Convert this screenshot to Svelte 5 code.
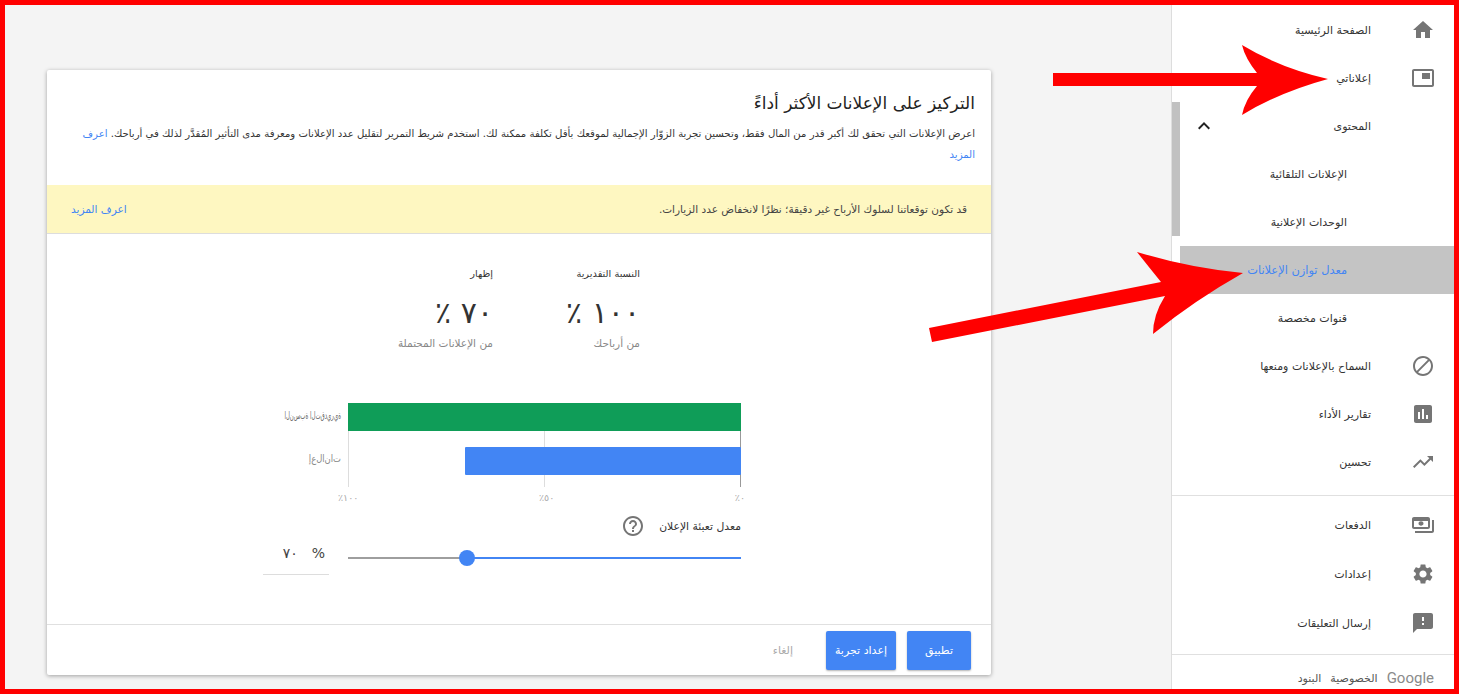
<script lang="ts">
	const icons = {
		home: 'M10 20v-6h4v6h5v-8h3L12 3 2 12h3v8z',
		ads: 'M19 7h-8v6h8V7zm2-4H3c-1.1 0-2 .9-2 2v14c0 1.1.9 1.98 2 1.98h18c1.1 0 2-.88 2-1.98V5c0-1.1-.9-2-2-2zm0 16.01H3V4.98h18v14.03z',
		block: 'M12 2C6.48 2 2 6.48 2 12s4.48 10 10 10 10-4.48 10-10S17.52 2 12 2zM4 12c0-4.42 3.58-8 8-8 1.85 0 3.55.63 4.9 1.69L5.69 16.9C4.63 15.55 4 13.85 4 12zm8 8c-1.85 0-3.55-.63-4.9-1.69L18.31 7.1C19.37 8.45 20 10.15 20 12c0 4.42-3.58 8-8 8z',
		report: 'M19 3H5c-1.1 0-2 .9-2 2v14c0 1.1.9 2 2 2h14c1.1 0 2-.9 2-2V5c0-1.1-.9-2-2-2zM9 17H7v-7h2v7zm4 0h-2V7h2v10zm4 0h-2v-4h2v4z',
		trend: 'M16 6l2.29 2.29-4.88 4.88-4-4L2 16.59 3.41 18l6-6 4 4 6.3-6.29L22 12V6z',
		money: 'M19 14V6c0-1.1-.9-2-2-2H3c-1.1 0-2 .9-2 2v8c0 1.1.9 2 2 2h14c1.1 0 2-.9 2-2zm-2 0H3V8h14v6zm-7-5.7c-1.3 0-2.5.8-2.5 2.2s1.2 2.2 2.5 2.2 2.5-.8 2.5-2.2-1.2-2.2-2.5-2.2zM23 7v11c0 1.1-.9 2-2 2H4v-2h17V7h2z',
		gear: 'M19.14 12.94c.04-.3.06-.61.06-.94 0-.32-.02-.64-.07-.94l2.03-1.58c.18-.14.23-.41.12-.61l-1.92-3.32c-.12-.22-.37-.29-.59-.22l-2.39.96c-.5-.38-1.03-.7-1.62-.94l-.36-2.54c-.04-.24-.24-.41-.48-.41h-3.84c-.24 0-.43.17-.47.41l-.36 2.54c-.59.24-1.13.57-1.62.94l-2.39-.96c-.22-.08-.47 0-.59.22L2.74 8.87c-.12.21-.08.47.12.61l2.03 1.58c-.05.3-.09.63-.09.94s.02.64.07.94l-2.03 1.58c-.18.14-.23.41-.12.61l1.92 3.32c.12.22.37.29.59.22l2.39-.96c.5.38 1.03.7 1.62.94l.36 2.54c.05.24.24.41.48.41h3.84c.24 0 .44-.17.47-.41l.36-2.54c.59-.24 1.13-.56 1.62-.94l2.39.96c.22.08.47 0 .59-.22l1.92-3.32c.12-.22.07-.47-.12-.61l-2.01-1.58zM12 15.6c-1.98 0-3.6-1.62-3.6-3.6s1.62-3.6 3.6-3.6 3.6 1.62 3.6 3.6-1.62 3.6-3.6 3.6z',
		feedback: 'M20 2H4c-1.1 0-1.99.9-1.99 2L2 22l4-4h14c1.1 0 2-.9 2-2V4c0-1.1-.9-2-2-2zm-7 12h-2v-2h2v2zm0-4h-2V6h2v4z',
		help: 'M11 18h2v-2h-2v2zm1-16C6.48 2 2 6.48 2 12s4.48 10 10 10 10-4.48 10-10S17.52 2 12 2zm0 18c-4.41 0-8-3.59-8-8s3.59-8 8-8 8 3.59 8 8-3.59 8-8 8zm0-14c-2.21 0-4 1.79-4 4h2c0-1.1.9-2 2-2s2 .9 2 2c0 2-3 1.75-3 5h2c0-2.25 3-2.5 3-5 0-2.21-1.79-4-4-4z',
		chevron: 'M12 8l-6 6 1.41 1.41L12 10.83l4.59 4.58L18 14z'
	};

	const mainNav = [
		{ label: 'الصفحة الرئيسية', icon: icons.home },
		{ label: 'إعلاناتي', icon: icons.ads },
		{ label: 'المحتوى', chevron: true },
		{ label: 'الإعلانات التلقائية', sub: true },
		{ label: 'الوحدات الإعلانية', sub: true },
		{ label: 'معدل توازن الإعلانات', sub: true, active: true },
		{ label: 'قنوات مخصصة', sub: true },
		{ label: 'السماح بالإعلانات ومنعها', icon: icons.block },
		{ label: 'تقارير الأداء', icon: icons.report },
		{ label: 'تحسين', icon: icons.trend }
	];

	const lowerNav = [
		{ label: 'الدفعات', icon: icons.money },
		{ label: 'إعدادات', icon: icons.gear },
		{ label: 'إرسال التعليقات', icon: icons.feedback }
	];

	const stats = [
		{ title: 'النسبة التقديرية', value: '١٠٠ ٪', note: 'من أرباحك' },
		{ title: 'إظهار', value: '٧٠ ٪', note: 'من الإعلانات المحتملة' }
	];

	// the chart draws its labels with the letters unjoined, hence the ZWNJs
	const bars = [
		{ label: 'ا\u200cل\u200cن\u200cس\u200cب\u200cة ا\u200cل\u200cت\u200cق\u200cد\u200cي\u200cر\u200cي\u200cة', width: 100, tone: 'green' },
		{ label: 'إ\u200cع\u200cل\u200cا\u200cن\u200cا\u200cت', width: 70.3, tone: 'blue' }
	];
</script>

<div class="page" dir="rtl">
	<aside class="sidebar">
		<nav class="nav-top">
			{#each mainNav as item}
				<div class="row" class:sub={item.sub} class:active={item.active}>
					{#if !item.sub}
						<span class="icon-box">
							{#if item.icon}
								<svg viewBox="0 0 24 24" width="24" height="24"><path d={item.icon} /></svg>
							{/if}
						</span>
					{/if}
					<span class="row-label">{item.label}</span>
					{#if item.chevron}
						<svg class="chevron" viewBox="0 0 24 24" width="24" height="24"><path d={icons.chevron} /></svg>
					{/if}
				</div>
			{/each}
		</nav>
		<nav class="nav-lower">
			{#each lowerNav as item}
				<div class="row">
					<span class="icon-box">
						<svg viewBox="0 0 24 24" width="24" height="24"><path d={item.icon} /></svg>
					</span>
					<span class="row-label">{item.label}</span>
				</div>
			{/each}
		</nav>
		<footer class="side-footer">
			<span class="google">Google</span>
			<span>الخصوصية</span>
			<span>البنود</span>
		</footer>
		<div class="scroll-thumb"></div>
	</aside>

	<main class="content">
		<section class="card">
			<header class="card-head">
				<h1>التركيز على الإعلانات الأكثر أداءً</h1>
				<p>
					اعرض الإعلانات التي تحقق لك أكبر قدر من المال فقط، وتحسين تجربة الزوّار الإجمالية لموقعك بأقل تكلفة ممكنة لك. استخدم شريط التمرير لتقليل عدد الإعلانات ومعرفة مدى التأثير المُقدَّر لذلك في أرباحك.
					<a href="#more">اعرف المزيد</a>
				</p>
			</header>

			<div class="banner">
				<span>قد تكون توقعاتنا لسلوك الأرباح غير دقيقة؛ نظرًا لانخفاض عدد الزيارات.</span>
				<a href="#more">اعرف المزيد</a>
			</div>

			<div class="stats">
				{#each stats as stat}
					<div class="stat">
						<div class="stat-title">{stat.title}</div>
						<div class="stat-value">{stat.value}</div>
						<div class="stat-note">{stat.note}</div>
					</div>
				{/each}
			</div>

			<div class="chart">
				<div class="plot">
					<i class="grid-line start"></i>
					<i class="grid-line mid"></i>
					<i class="grid-line end"></i>
					{#each bars as bar}
						<div class="bar-row">
							<div class="bar {bar.tone}" style="width: {bar.width}%"></div>
							<bdo class="bar-label {bar.tone}" dir="ltr">{bar.label}</bdo>
						</div>
					{/each}
				</div>
				<div class="axis">
					<span>٠٪</span>
					<span>٥٠٪</span>
					<span>١٠٠٪</span>
				</div>
			</div>

			<div class="fill">
				<div class="fill-head">
					<span>معدل تعبئة الإعلان</span>
					<svg viewBox="0 0 24 24" width="24" height="24"><path d={icons.help} /></svg>
				</div>
				<div class="fill-row">
					<div class="track">
						<div class="track-on"></div>
						<div class="knob"></div>
					</div>
					<div class="fill-input">
						<span class="pct">%</span>
						<span>٧٠</span>
					</div>
				</div>
			</div>

			<div class="actions">
				<button class="btn apply">تطبيق</button>
				<button class="btn setup">إعداد تجربة</button>
				<button class="cancel">إلغاء</button>
			</div>
		</section>
	</main>

	<svg class="arrows" viewBox="0 0 1459 694" width="1459" height="694">
		<path d="M1053 73H1257Q1245 58 1242 45Q1280 68 1328 79Q1280 92 1242 115Q1245 100 1257 86H1053Z" />
		<path d="M929 328L1161 282Q1148 266 1137 252Q1190 268 1243 273Q1195 300 1153 334Q1153 315 1165 296L932 342Z" />
	</svg>
</div>

<style>
	:global(body) {
		margin: 0;
	}

	.page {
		position: relative;
		box-sizing: border-box;
		display: flex;
		width: 1459px;
		height: 694px;
		overflow: hidden;
		border: 5px solid #f00;
		background: #f4f4f4;
		color: #333;
		font-family: 'DejaVu Sans', 'Liberation Sans', sans-serif;
		font-size: 11px;
	}

	/* sidebar */
	.sidebar {
		position: relative;
		flex: 0 0 283px;
		box-sizing: border-box;
		padding-top: 1px;
		border-left: 1px solid #ddd;
		background: #fff;
	}

	.nav-top {
		padding-bottom: 9px;
		border-bottom: 1px solid #e0e0e0;
	}

	.nav-lower {
		padding: 5px 0 7px;
		border-bottom: 1px solid #e0e0e0;
	}

	.row {
		display: flex;
		align-items: center;
		height: 48px;
		margin-left: 8px;
		padding-right: 19px;
		color: #333;
	}

	.row.sub {
		padding-right: 107px;
	}

	.row.active {
		background: #c4c4c4;
		color: #4285f4;
		font-size: 11.4px;
	}

	.icon-box {
		flex: 0 0 24px;
		height: 24px;
		margin-left: 40px;
	}

	.icon-box svg {
		display: block;
		fill: #757575;
	}

	.chevron {
		margin-right: auto;
		margin-left: 12px;
		fill: #222;
	}

	.nav-lower .row:nth-child(n + 2) {
		margin-top: 1px;
	}

	.side-footer {
		display: flex;
		align-items: center;
		gap: 9px;
		padding: 14px 20px 0 0;
		font-size: 11px;
		color: #555;
	}

	.google {
		font-family: Roboto, sans-serif;
		font-size: 15px;
		color: #8a8a8a;
	}

	.scroll-thumb {
		position: absolute;
		top: 97px;
		left: 0;
		width: 8px;
		height: 134px;
		background: #c1c1c1;
	}

	/* main column */
	.content {
		flex: 1;
		padding: 65px 180px 0 42px;
	}

	.card {
		display: flex;
		flex-direction: column;
		height: 605px;
		border-radius: 2px;
		background: #fff;
		box-shadow: 0 1px 4px rgba(0, 0, 0, 0.35);
	}

	.card-head {
		height: 115px;
		box-sizing: border-box;
		padding: 21px 16px 0;
	}

	h1 {
		margin: 0;
		font-size: 17px;
		font-weight: 400;
		line-height: 24px;
		color: #222;
	}

	.card-head p {
		margin: 8px 0 0;
		font-size: 10.15px;
		line-height: 21px;
		color: #333;
	}

	a {
		color: #4285f4;
		text-decoration: none;
	}

	.banner {
		display: flex;
		align-items: center;
		justify-content: space-between;
		height: 48px;
		padding: 0 24px;
		border-bottom: 1px solid #ddd;
		background: #fef7c1;
		color: #444;
		font-size: 10.5px;
	}

	.stats {
		display: flex;
		gap: 50px;
		padding: 32px 351px 0 0;
		height: 137px;
	}

	.stat {
		width: 97px;
		white-space: nowrap;
	}

	.stat-title {
		font-size: 9.8px;
		line-height: 16px;
	}

	.stat-value {
		margin-top: 12px;
		font-size: 30px;
		line-height: 38px;
		color: #333;
	}

	.stat-note {
		margin-top: 3px;
		font-size: 10.5px;
		line-height: 16px;
		color: #888;
	}

	/* chart */
	.chart {
		margin-right: 250px;
		width: 393px;
	}

	.plot {
		position: relative;
		display: flex;
		flex-direction: column;
		gap: 16px;
		height: 84px;
	}

	.grid-line {
		position: absolute;
		top: 0;
		bottom: 0;
		width: 1px;
		background: #ddd;
	}

	.grid-line.start {
		right: 0;
		background: #999;
	}

	.grid-line.mid {
		right: 196px;
	}

	.grid-line.end {
		left: 0;
	}

	.bar-row {
		position: relative;
		height: 28px;
	}

	.bar {
		position: relative;
		height: 28px;
	}

	.bar.green {
		background: #0f9d58;
	}

	.bar.blue {
		background: #4285f4;
		border-radius: 1px;
	}

	.bar-label {
		position: absolute;
		top: 7px;
		left: -7px;
		transform-origin: right center;
		white-space: nowrap;
		font-size: 10px;
		color: #888;
	}

	/* letter-spacing does nothing on Arabic here, so squeeze the run instead */
	.bar-label.green {
		transform: translateX(-100%) scaleX(0.54);
		color: #666;
	}

	.bar-label.blue {
		top: 6px;
		transform: translateX(-100%) scaleX(0.84);
	}

	.axis {
		position: relative;
		display: flex;
		justify-content: space-between;
		height: 20px;
		margin: 0 -4px 0 -10px;
		padding-top: 4px;
		box-sizing: border-box;
		font-size: 9.5px;
		line-height: 14px;
		color: #aaa;
	}

	/* ad fill slider */
	.fill {
		margin-right: 250px;
		margin-top: 7px;
	}

	.fill-head {
		display: flex;
		align-items: center;
		gap: 14px;
		height: 24px;
		font-size: 10.8px;
		color: #333;
	}

	.fill-head svg {
		fill: #757575;
	}

	.fill-row {
		display: flex;
		align-items: center;
		margin-top: 4px;
		height: 32px;
	}

	.track {
		position: relative;
		width: 393px;
		height: 2px;
		background: #9e9e9e;
	}

	.track-on {
		width: 274px;
		height: 2px;
		background: #4285f4;
	}

	.knob {
		position: absolute;
		top: -7px;
		right: 266px;
		width: 16px;
		height: 16px;
		border-radius: 50%;
		background: #4285f4;
	}

	.fill-input {
		display: flex;
		align-items: center;
		gap: 14px;
		width: 66px;
		box-sizing: border-box;
		height: 32px;
		margin-top: 1px;
		margin-right: 19px;
		padding: 0 4px 10px 0;
		border-bottom: 1px solid #ddd;
		font-size: 14px;
		color: #444;
	}

	/* footer */
	.actions {
		display: flex;
		align-items: center;
		gap: 11px;
		height: 51px;
		box-sizing: border-box;
		margin-top: auto;
		padding: 0 20px;
		border-top: 1px solid #e0e0e0;
	}

	.btn {
		height: 39px;
		border: 0;
		border-radius: 2px;
		background: #4285f4;
		box-shadow: 0 1px 2px rgba(0, 0, 0, 0.3);
		color: #fff;
		font: inherit;
		font-size: 11px;
	}

	.apply {
		width: 64px;
	}

	.setup {
		width: 70px;
	}

	.cancel {
		margin-right: 22px;
		border: 0;
		padding: 0;
		background: none;
		color: #aaa;
		font: inherit;
		font-size: 11px;
	}

	.arrows {
		position: absolute;
		top: -5px;
		left: -5px;
		pointer-events: none;
		fill: #f00;
	}
</style>
